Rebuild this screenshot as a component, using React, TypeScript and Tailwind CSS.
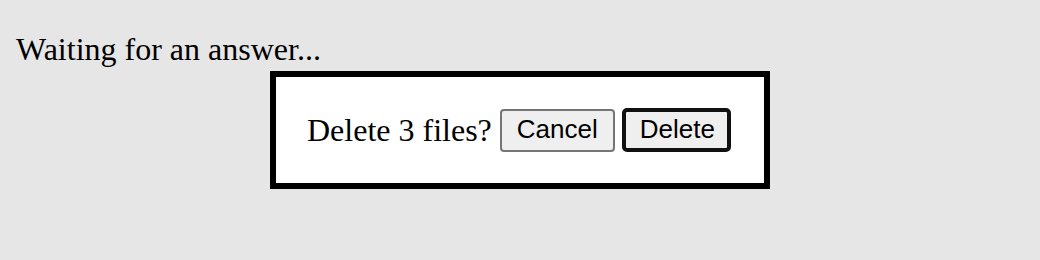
export default function App() {
  return (
    <div className="relative h-[260px] w-full bg-[#e6e6e6] px-[16px] pt-[31px]" style={{ fontFamily: '"Liberation Serif", serif' }}>
      <p className="text-[32px] leading-[normal] text-black">Waiting for an answer...</p>

      <div className="fixed inset-0 flex items-center justify-center">
        <div className="w-[500px] border-[6px] border-black bg-white px-[31px] py-[30px]">
          <div className="flex h-[46px] items-center">
            <span className="text-[32px] leading-[normal] text-black">Delete 3 files?</span>
            <button
              className="ml-[8px] h-[43px] rounded-[4px] border-2 border-[#767676] bg-[#efefef] px-[15px] pb-[1px] text-[26px] leading-[normal] text-black"
              style={{ fontFamily: '"Liberation Sans", Arial, sans-serif' }}
            >
              Cancel
            </button>
            <button
              className="ml-[7px] h-[44px] rounded-[5px] border-[4px] border-[#111111] bg-[#efefef] pl-[14px] pr-[12px] pb-[1px] text-[26px] leading-[normal] text-black"
              style={{ fontFamily: '"Liberation Sans", Arial, sans-serif' }}
            >
              Delete
            </button>
          </div>
        </div>
      </div>
    </div>
  )
}
